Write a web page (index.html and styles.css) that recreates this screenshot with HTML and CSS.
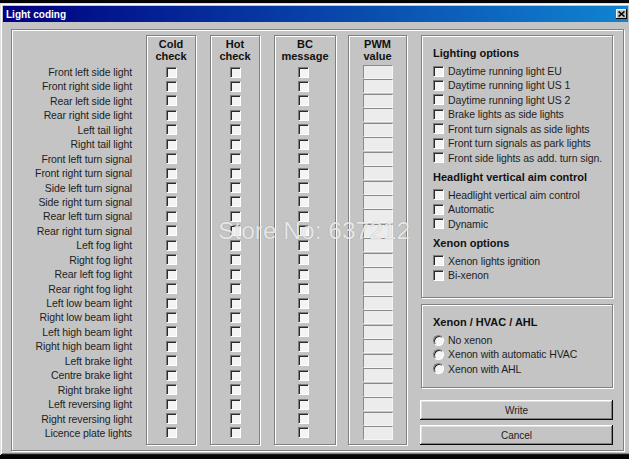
FILE: index.html
```html
<!DOCTYPE html>
<html lang="en">
<head>
    <meta charset="UTF-8">
    <title>Light coding</title>
    <link rel="stylesheet" href="styles.css">
</head>
<body>
    <div class="window">
        <div class="titlebar">
            <span>Light coding</span>
            <span class="close"><svg width="7" height="6" viewBox="0 0 7 6"><path d="M0.5 0.5 L6.5 5.5 M6.5 0.5 L0.5 5.5" stroke="#000" stroke-width="1.6" fill="none"/></svg></span>
        </div>
        <div class="content">
            <div class="frame">
                <!-- row captions -->
                <div class="labels">
                    <div class="head"></div>
                    <div class="row">Front left side light</div>
                    <div class="row">Front right side light</div>
                    <div class="row">Rear left side light</div>
                    <div class="row">Rear right side light</div>
                    <div class="row">Left tail light</div>
                    <div class="row">Right tail light</div>
                    <div class="row">Front left turn signal</div>
                    <div class="row">Front right turn signal</div>
                    <div class="row">Side left turn signal</div>
                    <div class="row">Side right turn signal</div>
                    <div class="row">Rear left turn signal</div>
                    <div class="row">Rear right turn signal</div>
                    <div class="row">Left fog light</div>
                    <div class="row">Right fog light</div>
                    <div class="row">Rear left fog light</div>
                    <div class="row">Rear right fog light</div>
                    <div class="row">Left low beam light</div>
                    <div class="row">Right low beam light</div>
                    <div class="row">Left high beam light</div>
                    <div class="row">Right high beam light</div>
                    <div class="row">Left brake light</div>
                    <div class="row">Centre brake light</div>
                    <div class="row">Right brake light</div>
                    <div class="row">Left reversing light</div>
                    <div class="row">Right reversing light</div>
                    <div class="row">Licence plate lights</div>
                </div>

                <div class="col cold">
                    <div class="head">Cold<br>check</div>
                    <div class="row"><span class="chk"></span></div>
                    <div class="row"><span class="chk"></span></div>
                    <div class="row"><span class="chk"></span></div>
                    <div class="row"><span class="chk"></span></div>
                    <div class="row"><span class="chk"></span></div>
                    <div class="row"><span class="chk"></span></div>
                    <div class="row"><span class="chk"></span></div>
                    <div class="row"><span class="chk"></span></div>
                    <div class="row"><span class="chk"></span></div>
                    <div class="row"><span class="chk"></span></div>
                    <div class="row"><span class="chk"></span></div>
                    <div class="row"><span class="chk"></span></div>
                    <div class="row"><span class="chk"></span></div>
                    <div class="row"><span class="chk"></span></div>
                    <div class="row"><span class="chk"></span></div>
                    <div class="row"><span class="chk"></span></div>
                    <div class="row"><span class="chk"></span></div>
                    <div class="row"><span class="chk"></span></div>
                    <div class="row"><span class="chk"></span></div>
                    <div class="row"><span class="chk"></span></div>
                    <div class="row"><span class="chk"></span></div>
                    <div class="row"><span class="chk"></span></div>
                    <div class="row"><span class="chk"></span></div>
                    <div class="row"><span class="chk"></span></div>
                    <div class="row"><span class="chk"></span></div>
                    <div class="row"><span class="chk"></span></div>
                </div>

                <div class="col hot">
                    <div class="head">Hot<br>check</div>
                    <div class="row"><span class="chk"></span></div>
                    <div class="row"><span class="chk"></span></div>
                    <div class="row"><span class="chk"></span></div>
                    <div class="row"><span class="chk"></span></div>
                    <div class="row"><span class="chk"></span></div>
                    <div class="row"><span class="chk"></span></div>
                    <div class="row"><span class="chk"></span></div>
                    <div class="row"><span class="chk"></span></div>
                    <div class="row"><span class="chk"></span></div>
                    <div class="row"><span class="chk"></span></div>
                    <div class="row"><span class="chk"></span></div>
                    <div class="row"><span class="chk"></span></div>
                    <div class="row"><span class="chk"></span></div>
                    <div class="row"><span class="chk"></span></div>
                    <div class="row"><span class="chk"></span></div>
                    <div class="row"><span class="chk"></span></div>
                    <div class="row"><span class="chk"></span></div>
                    <div class="row"><span class="chk"></span></div>
                    <div class="row"><span class="chk"></span></div>
                    <div class="row"><span class="chk"></span></div>
                    <div class="row"><span class="chk"></span></div>
                    <div class="row"><span class="chk"></span></div>
                    <div class="row"><span class="chk"></span></div>
                    <div class="row"><span class="chk"></span></div>
                    <div class="row"><span class="chk"></span></div>
                    <div class="row"><span class="chk"></span></div>
                </div>

                <div class="col bc">
                    <div class="head">BC<br>message</div>
                    <div class="row"><span class="chk"></span></div>
                    <div class="row"><span class="chk"></span></div>
                    <div class="row"><span class="chk"></span></div>
                    <div class="row"><span class="chk"></span></div>
                    <div class="row"><span class="chk"></span></div>
                    <div class="row"><span class="chk"></span></div>
                    <div class="row"><span class="chk"></span></div>
                    <div class="row"><span class="chk"></span></div>
                    <div class="row"><span class="chk"></span></div>
                    <div class="row"><span class="chk"></span></div>
                    <div class="row"><span class="chk"></span></div>
                    <div class="row"><span class="chk"></span></div>
                    <div class="row"><span class="chk"></span></div>
                    <div class="row"><span class="chk"></span></div>
                    <div class="row"><span class="chk"></span></div>
                    <div class="row"><span class="chk"></span></div>
                    <div class="row"><span class="chk"></span></div>
                    <div class="row"><span class="chk"></span></div>
                    <div class="row"><span class="chk"></span></div>
                    <div class="row"><span class="chk"></span></div>
                    <div class="row"><span class="chk"></span></div>
                    <div class="row"><span class="chk"></span></div>
                    <div class="row"><span class="chk"></span></div>
                    <div class="row"><span class="chk"></span></div>
                    <div class="row"><span class="chk"></span></div>
                    <div class="row"><span class="chk"></span></div>
                </div>

                <div class="col pwm">
                    <div class="head">PWM<br>value</div>
                    <div class="row"><span class="field"></span></div>
                    <div class="row"><span class="field"></span></div>
                    <div class="row"><span class="field"></span></div>
                    <div class="row"><span class="field"></span></div>
                    <div class="row"><span class="field"></span></div>
                    <div class="row"><span class="field"></span></div>
                    <div class="row"><span class="field"></span></div>
                    <div class="row"><span class="field"></span></div>
                    <div class="row"><span class="field"></span></div>
                    <div class="row"><span class="field"></span></div>
                    <div class="row"><span class="field"></span></div>
                    <div class="row"><span class="field"></span></div>
                    <div class="row"><span class="field"></span></div>
                    <div class="row"><span class="field"></span></div>
                    <div class="row"><span class="field"></span></div>
                    <div class="row"><span class="field"></span></div>
                    <div class="row"><span class="field"></span></div>
                    <div class="row"><span class="field"></span></div>
                    <div class="row"><span class="field"></span></div>
                    <div class="row"><span class="field"></span></div>
                    <div class="row"><span class="field"></span></div>
                    <div class="row"><span class="field"></span></div>
                    <div class="row"><span class="field"></span></div>
                    <div class="row"><span class="field"></span></div>
                    <div class="row"><span class="field"></span></div>
                    <div class="row"><span class="field"></span></div>
                </div>

                <div class="side">
                    <div class="group options">
                        <div class="gtitle">Lighting options</div>
                        <div class="item"><span class="chk"></span>Daytime running light EU</div>
                        <div class="item"><span class="chk"></span>Daytime running light US 1</div>
                        <div class="item"><span class="chk"></span>Daytime running light US 2</div>
                        <div class="item"><span class="chk"></span>Brake lights as side lights</div>
                        <div class="item"><span class="chk"></span>Front turn signals as side lights</div>
                        <div class="item"><span class="chk"></span>Front turn signals as park lights</div>
                        <div class="item"><span class="chk"></span>Front side lights as add. turn sign.</div>

                        <div class="gtitle next">Headlight vertical aim control</div>
                        <div class="item"><span class="chk"></span>Headlight vertical aim control</div>
                        <div class="item"><span class="chk"></span>Automatic</div>
                        <div class="item"><span class="chk"></span>Dynamic</div>

                        <div class="gtitle next">Xenon options</div>
                        <div class="item"><span class="chk"></span>Xenon lights ignition</div>
                        <div class="item"><span class="chk"></span>Bi-xenon</div>
                    </div>

                    <div class="group xenon">
                        <div class="gtitle">Xenon / HVAC / AHL</div>
                        <div class="item"><span class="radio"></span>No xenon</div>
                        <div class="item"><span class="radio"></span>Xenon with automatic HVAC</div>
                        <div class="item"><span class="radio"></span>Xenon with AHL</div>
                    </div>

                    <button class="btn write">Write</button>
                    <button class="btn cancel">Cancel</button>
                </div>
            </div>
        </div>
        <div class="stamp">Store No: 637212</div>
    </div>
</body>
</html>
```

FILE: styles.css
```css
body { margin: 0; background: #050505; overflow: hidden; font-family: "Liberation Sans", Arial, sans-serif; color: #1e1e1e; }

/* window chrome */
.window { position: relative; width: 631px; height: 452px; margin-top: 3px; box-sizing: border-box; padding: 3px; background: #c4c4c4; box-shadow: inset 1px 1px #dfdfdf, inset -1px -1px #1a1a1a, inset 2px 2px #fff, inset -2px -2px #808080; }
.titlebar { height: 16px; display: flex; align-items: center; justify-content: space-between; padding: 0 1px 0 3px; background: linear-gradient(90deg, #000080, #1084d0); color: #fff; font-size: 10px; font-weight: bold; }
.close { width: 11px; height: 10px; display: flex; align-items: center; justify-content: center; background: #c4c4c4; box-shadow: inset -1px -1px #000, inset 1px 1px #fff; }
.content { padding: 7px 4px 0 8px; }

/* etched group boxes */
.frame, .col, .group { border: 1px solid #808080; box-shadow: inset 1px 1px #fff, 1px 1px #fff; box-sizing: border-box; }
.frame { display: flex; height: 422px; padding: 5px 10px 5px 0; }

.labels { width: 134px; padding-right: 14px; box-sizing: border-box; }
.labels .head { height: 29.8px; }
.labels .row { justify-content: flex-end; font-size: 10.5px; letter-spacing: -0.1px; white-space: nowrap; }

.col { display: flex; flex-direction: column; }
.col .head { height: 28.8px; padding-top: 2px; box-sizing: border-box; text-align: center; font-size: 11px; font-weight: bold; line-height: 12px; color: #111; }
.cold { width: 50px; }
.hot { width: 50px; margin-left: 14px; }
.bc { width: 62px; margin-left: 14px; }
.bc .row { padding-right: 3px; }
.pwm { width: 59px; margin-left: 12px; }

.row { height: 14.44px; display: flex; align-items: center; justify-content: center; }

/* sunken controls */
.chk { width: 11px; height: 11px; flex: none; box-sizing: border-box; background: #f4f4f4; border: 1px solid; border-color: #7c7c7c #fff #fff #7c7c7c; box-shadow: inset 1px 1px #2a2a2a; }
.radio { width: 11px; height: 11px; flex: none; box-sizing: border-box; border-radius: 50%; background: #f4f4f4; border: 1px solid; border-color: #7c7c7c #fff #fff #7c7c7c; box-shadow: inset 1px 1px #2a2a2a; }
.field { width: 30px; height: 14px; box-sizing: border-box; background: #ececec; border: 1px solid; border-color: #8a8a8a #f6f6f6 #f6f6f6 #8a8a8a; }

/* right hand panel */
.side { width: 192px; margin-left: 14px; display: flex; flex-direction: column; }
.group { padding: 11px 6px 0 11px; }
.options { height: 263px; }
.xenon { height: 84px; margin-top: 6px; }
.gtitle { font-size: 11px; font-weight: bold; line-height: 12px; margin-bottom: 4.8px; color: #111; }
.gtitle.next { margin-top: 5.8px; }
.item { height: 14.44px; display: flex; align-items: center; font-size: 10.5px; letter-spacing: -0.1px; white-space: nowrap; }
.item .chk, .item .radio { margin-right: 4px; }

.btn { height: 20px; margin-left: -1px; width: 193px; border: 0; padding: 0; background: #c4c4c4; font-family: inherit; font-size: 10px; color: #222; box-shadow: inset -1px -1px #0a0a0a, inset 1px 1px #fff, inset -2px -2px #808080, inset 2px 2px #dfdfdf; }
.write { margin-top: 12px; }
.cancel { margin-top: 5px; }

/* seller mark printed over the dialog */
.stamp { position: absolute; left: 218px; top: 216px; font-size: 24.5px; line-height: 1; color: rgba(255, 255, 255, 0.78); text-shadow: 0 0 1px rgba(0, 0, 0, 0.3); white-space: nowrap; }
```
